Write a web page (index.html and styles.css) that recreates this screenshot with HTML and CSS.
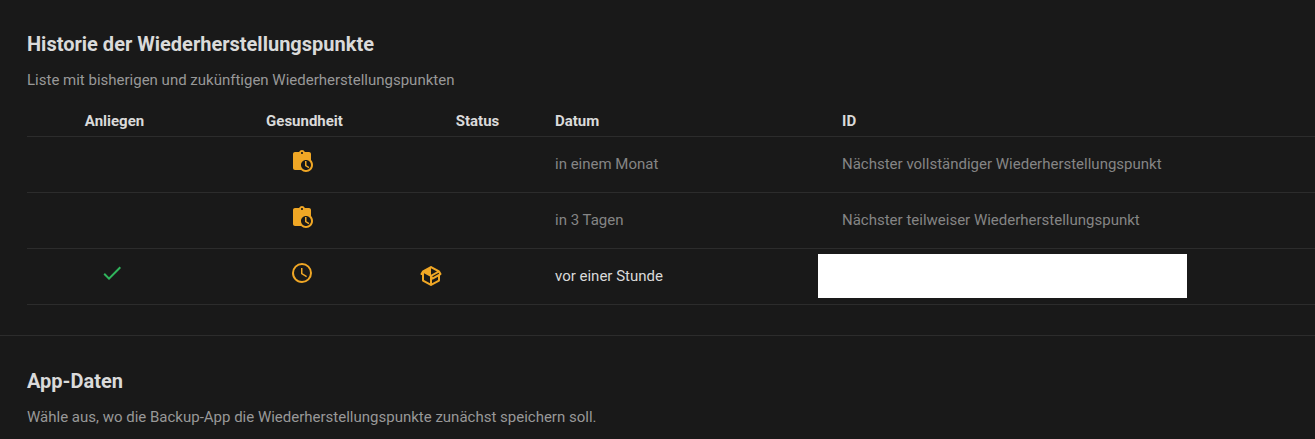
FILE: index.html
```html
<!DOCTYPE html>
<html lang="de">
<head>
<meta charset="utf-8">
<meta name="viewport" content="width=device-width, initial-scale=1">
<title>Wiederherstellungspunkte</title>
<link rel="stylesheet" href="styles.css">
</head>
<body>
<main>
  <section class="section">
    <h2 class="section-title">Historie der Wiederherstellungspunkte</h2>
    <p class="section-text">Liste mit bisherigen und zukünftigen Wiederherstellungspunkten</p>
    <table class="history">
      <colgroup>
        <col class="col-retention"><col class="col-health"><col class="col-status"><col class="col-date"><col>
      </colgroup>
      <thead>
        <tr>
          <th class="centered" scope="col">Anliegen</th>
          <th class="centered" scope="col">Gesundheit</th>
          <th class="centered" scope="col">Status</th>
          <th scope="col">Datum</th>
          <th scope="col">ID</th>
        </tr>
      </thead>
      <tbody>
        <tr class="upcoming">
          <td></td>
          <td class="icon-cell"><svg class="icon pending" viewBox="0 0 24 24" role="img" aria-label="Geplant"><path d="M21 11.11V5C21 3.9 20.11 3 19 3H14.82C14.4 1.84 13.3 1 12 1S9.6 1.84 9.18 3H5C3.9 3 3 3.9 3 5V19C3 20.11 3.9 21 5 21H11.11C12.37 22.24 14.09 23 16 23C19.87 23 23 19.87 23 16C23 14.09 22.24 12.37 21 11.11M12 3C12.55 3 13 3.45 13 4S12.55 5 12 5 11 4.55 11 4 11.45 3 12 3M16 21C13.24 21 11 18.76 11 16S13.24 11 16 11 21 13.24 21 16 18.76 21 16 21M16.5 16.25L19.36 17.94L18.61 19.16L15 17V12H16.5V16.25Z"/></svg></td>
          <td></td>
          <td>in einem Monat</td>
          <td>Nächster vollständiger Wiederherstellungspunkt</td>
        </tr>
        <tr class="upcoming">
          <td></td>
          <td class="icon-cell"><svg class="icon pending" viewBox="0 0 24 24" role="img" aria-label="Geplant"><path d="M21 11.11V5C21 3.9 20.11 3 19 3H14.82C14.4 1.84 13.3 1 12 1S9.6 1.84 9.18 3H5C3.9 3 3 3.9 3 5V19C3 20.11 3.9 21 5 21H11.11C12.37 22.24 14.09 23 16 23C19.87 23 23 19.87 23 16C23 14.09 22.24 12.37 21 11.11M12 3C12.55 3 13 3.45 13 4S12.55 5 12 5 11 4.55 11 4 11.45 3 12 3M16 21C13.24 21 11 18.76 11 16S13.24 11 16 11 21 13.24 21 16 18.76 21 16 21M16.5 16.25L19.36 17.94L18.61 19.16L15 17V12H16.5V16.25Z"/></svg></td>
          <td></td>
          <td>in 3 Tagen</td>
          <td>Nächster teilweiser Wiederherstellungspunkt</td>
        </tr>
        <tr>
          <td class="icon-cell"><svg class="icon success" viewBox="0 0 24 24" role="img" aria-label="In Ordnung"><path d="M21,7L9,19L3.5,13.5L4.91,12.09L9,16.17L19.59,5.59L21,7Z"/></svg></td>
          <td class="icon-cell"><svg class="icon pending" viewBox="0 0 24 24" role="img" aria-label="Ausstehend"><path d="M12,20A8,8 0 0,0 20,12A8,8 0 0,0 12,4A8,8 0 0,0 4,12A8,8 0 0,0 12,20M12,2A10,10 0 0,1 22,12A10,10 0 0,1 12,22C6.47,22 2,17.5 2,12A10,10 0 0,1 12,2M12.5,7V12.25L17,14.92L16.25,16.15L11,13V7H12.5Z"/></svg></td>
          <td><svg class="icon pending" viewBox="0 0 24 24" role="img" aria-label="Paket"><path d="M2,10.96C1.5,10.68 1.35,10.07 1.63,9.59L3.13,7C3.24,6.8 3.41,6.66 3.6,6.58L11.43,2.18C11.59,2.06 11.79,2 12,2C12.21,2 12.41,2.06 12.57,2.18L20.47,6.62C20.66,6.72 20.82,6.88 20.91,7.08L22.36,9.6C22.64,10.08 22.47,10.69 22,10.96L21,11.54V16.5C21,16.88 20.79,17.21 20.47,17.38L12.57,21.82C12.41,21.94 12.21,22 12,22C11.79,22 11.59,21.94 11.43,21.82L3.53,17.38C3.21,17.21 3,16.88 3,16.5V10.96C2.7,11.13 2.32,11.14 2,10.96M12,4.15V4.15L12,10.85V10.85L17.96,7.5L12,4.15M5,15.91L11,19.29V12.58L5,9.21V15.91M19,15.91V12.69L14,15.59C13.67,15.77 13.3,15.76 13,15.6V19.29L19,15.91M13.85,13.36L20.13,9.73L19.55,8.72L13.27,12.35L13.85,13.36Z"/></svg></td>
          <td>vor einer Stunde</td>
          <td class="id-cell"><div class="redacted"></div></td>
        </tr>
      </tbody>
    </table>
  </section>
  <section class="section">
    <h2 class="section-title">App-Daten</h2>
    <p class="section-text">Wähle aus, wo die Backup-App die Wiederherstellungspunkte zunächst speichern soll.</p>
  </section>
</main>
</body>
</html>
```

FILE: styles.css
```css
* {
  box-sizing: border-box;
}

body {
  margin: 0;
  background: #191919;
  color: #dadada;
  font: 15px/20px Roboto, "Liberation Sans", sans-serif;
}

.section {
  padding: 30px 0 30px 27px;
}

.section + .section {
  border-top: 1px solid #2c2c2c;
  padding-top: 31px;
  padding-bottom: 0;
}

.section-title {
  margin: 0;
  font-size: 20px;
  line-height: 28px;
  font-weight: 700;
}

.section-text {
  margin: 12px 0 0;
  color: #989898;
}

.history {
  width: 100%;
  margin-top: 21px;
  border-collapse: separate;
  border-spacing: 0;
  table-layout: fixed;
}

.col-retention { width: 170px; }
.col-health { width: 210px; }
.col-status { width: 136px; }
.col-date { width: 287px; }

th,
td {
  border-bottom: 1px solid #2c2c2c;
  text-align: left;
}

th {
  padding: 0 12px 5px;
  font-weight: 700;
}

th.centered {
  padding: 0 0 5px 5px;
  text-align: center;
}

td {
  height: 56px;
  padding: 0 12px 2px;
  vertical-align: middle;
}

td.icon-cell {
  padding: 12px 0 0;
  text-align: center;
  vertical-align: top;
}

td.id-cell {
  padding: 0 0 2px;
}

.upcoming {
  color: #858585;
}

.icon {
  width: 24px;
  height: 24px;
  vertical-align: top;
}

.pending {
  fill: #f0a725;
}

.success {
  fill: #30b55c;
}

.redacted {
  width: 369px;
  max-width: 100%;
  height: 44px;
  margin-left: -12px;
  background: #fff;
}
```
